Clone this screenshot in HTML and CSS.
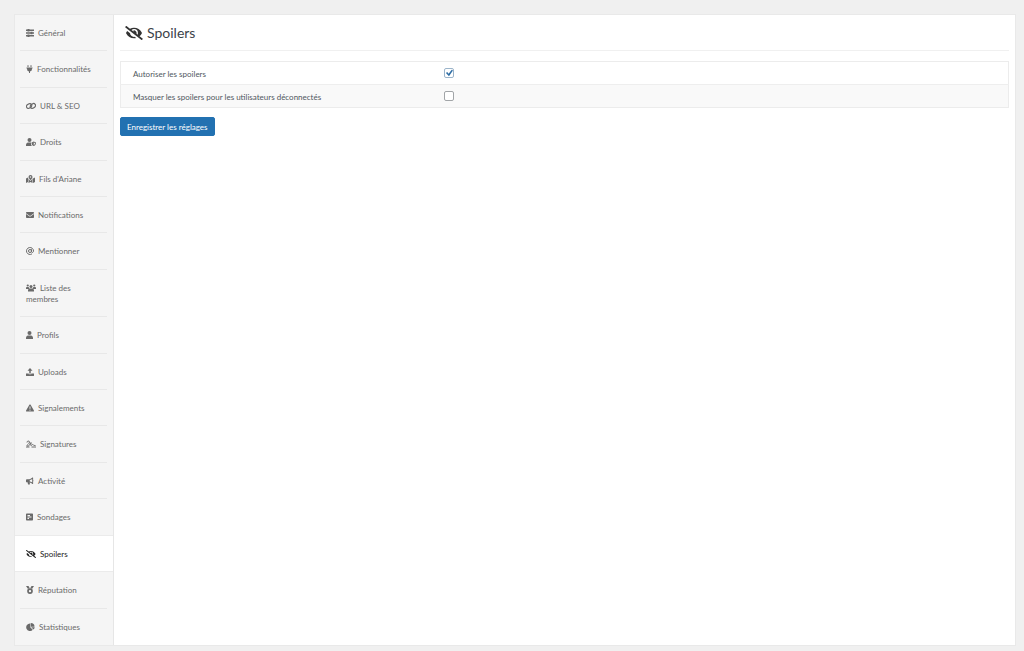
FILE: index.html
```html
<!DOCTYPE html>
<html lang="fr">

<head>
    <meta charset="UTF-8">
    <meta name="viewport" content="width=device-width, initial-scale=1.0">
    <title>Spoilers</title>
    <link rel="stylesheet" href="styles.css">
</head>

<body>

    <svg class="sprite" aria-hidden="true">
        <symbol id="sliders" viewBox="0 0 16 16">
            <path d="M0 1h3V0h4v1h9v3H7v1H3V4H0zM0 6.500h9v-1h4v1h3v3h-3v1H9v-1H0zM0 12h3v-1h4v1h9v3H7v1H3v-1H0z" />
        </symbol>
        <symbol id="plug" viewBox="0 0 12 16">
            <path d="M2 1a1 1 0 0 1 2 0v3H2zM8 1a1 1 0 0 1 2 0v3H8zM0 5h12v2h-1v1a5 5 0 0 1-4 4.900V16H5v-3.100A5 5 0 0 1 1 8V7H0z" />
        </symbol>
        <symbol id="link" viewBox="0 0 20 16">
            <g fill="none" stroke="currentColor" stroke-width="2.400">
                <rect x="1" y="4" width="11" height="8" rx="4" transform="rotate(-35 6.500 8.500)" />
                <rect x="8" y="4" width="11" height="8" rx="4" transform="rotate(-35 13.500 7.500)" />
            </g>
        </symbol>
        <symbol id="user-shield" viewBox="0 0 20 16">
            <circle cx="7" cy="4" r="4" />
            <path d="M0 16v-2c0-3 2-5 4-5h6v3c0 2 1 3 2 4z" />
            <path fill-rule="evenodd" d="M15.500 7L20 9c0 3-1 6-4.500 7C12 15 11 12 11 9zM15.500 9v5c1.500-.7 2.500-2 2.500-4z" />
        </symbol>
        <symbol id="map" viewBox="0 0 18 16">
            <path d="M0 7l4-2v9l-4 2zM14 7l4-2v9l-4 2zM5 6c1 3 3 5 4 6 1-1 3-3 4-6v10l-4-2-4 2z" />
            <path fill-rule="evenodd" d="M9 0a4 4 0 0 1 4 4c0 2-2 4-4 6.500C7 8 5 6 5 4a4 4 0 0 1 4-4zm0 2.500a1.500 1.500 0 1 0 0 3 1.500 1.500 0 0 0 0-3z" />
        </symbol>
        <symbol id="envelope" viewBox="0 0 16 16">
            <path d="M1.500 2h13A1.500 1.500 0 0 1 16 3.500v1L8 10 0 4.500v-1A1.500 1.500 0 0 1 1.500 2zM0 6l8 5.500L16 6v6.500a1.500 1.500 0 0 1-1.500 1.500h-13A1.500 1.500 0 0 1 0 12.500z" />
        </symbol>
        <symbol id="at" viewBox="0 0 16 16">
            <g fill="none" stroke="currentColor" stroke-width="2">
                <circle cx="8" cy="8" r="3" />
                <path d="M11 4.500V9c0 3 4 2.500 4-1a7 7 0 1 0-3 5.700" />
            </g>
        </symbol>
        <symbol id="users" viewBox="0 0 20 16">
            <circle cx="3.500" cy="3" r="2.200" />
            <circle cx="16.500" cy="3" r="2.200" />
            <circle cx="10" cy="5" r="3" />
            <path d="M0 10V8c0-1 1-2 2-2h3.500c0 1.500.5 2.500 1.500 3l-2 1zM20 10V8c0-1-1-2-2-2h-3.500c0 1.500-.5 2.500-1.500 3l2 1zM4 15v-2c0-2 1-4 3.500-4h5C15 9 16 11 16 13v2z" />
        </symbol>
        <symbol id="user" viewBox="0 0 14 16">
            <circle cx="7" cy="4" r="4" />
            <path d="M0 16v-2c0-3 2-5 4-5h6c2 0 4 2 4 5v2z" />
        </symbol>
        <symbol id="upload" viewBox="0 0 16 16">
            <path d="M8 0l5 5.500h-3.500V11h-3V5.500H3z" />
            <path d="M0 11h5.500v1.500h5V11H16v4a1 1 0 0 1-1 1H1a1 1 0 0 1-1-1z" />
        </symbol>
        <symbol id="warning" viewBox="0 0 16 16">
            <path fill-rule="evenodd" d="M8 1c.5 0 .9.300 1.200.7l6.600 11.500c.5 1-.1 1.800-1.200 1.800H1.400c-1.100 0-1.700-.8-1.200-1.800L6.800 1.700C7.100 1.300 7.500 1 8 1zM7 5l.3 5h1.400L9 5zM8 11a1.200 1.200 0 1 0 0 2.400A1.200 1.200 0 0 0 8 11z" />
        </symbol>
        <symbol id="signature" viewBox="0 0 20 16">
            <path fill="none" stroke="currentColor" stroke-width="2" d="M2 5V4c0-2 5-3 5 0 0 4-5 5-5 7s3 2 5-1l3-5c1 3-2 6 0 6s3-3 4-2 0 2 5 2M0 14h7M11 14h9" />
        </symbol>
        <symbol id="bullhorn" viewBox="0 0 18 16">
            <path fill-rule="evenodd" d="M15 0c.6 0 1 .4 1 1v5a2 2 0 0 1 0 3v5c0 1-1 1-1.500.700C12.500 13 11 11.500 8 11.200L9 15c0 .6-.3 1-1 1H5.500c-.5 0-.8-.2-1-.7L3.500 11H2a2 2 0 0 1-2-2V6a2 2 0 0 1 2-2h5c3.500 0 5.500-2 7.500-3.700zM14 3.500C12 5 10.500 5.700 8.500 6v3c2 .3 3.500 1 5.500 2.500z" />
        </symbol>
        <symbol id="poll" viewBox="0 0 14 16">
            <path fill-rule="evenodd" d="M1.500 1h11A1.500 1.500 0 0 1 14 2.500v11a1.500 1.500 0 0 1-1.500 1.500h-11A1.500 1.500 0 0 1 0 13.500v-11A1.500 1.500 0 0 1 1.500 1zM3 4v1.800h5V4zM3 7.100v1.800h8V7.100zM3 10.200V12h3v-1.800z" />
        </symbol>
        <symbol id="eye-slash" viewBox="0 0 640 512">
            <path d="M320 400c-75.850 0-137.250-58.710-142.900-133.110L72.200 185.820c-13.790 17.300-26.480 35.590-36.720 55.590a32.350 32.350 0 0 0 0 29.190C89.710 376.410 197.070 448 320 448c26.910 0 52.870-4 77.890-10.460L346 397.390a144.130 144.130 0 0 1-26 2.610zm313.820 58.100l-110.550-85.440a331.250 331.250 0 0 0 81.250-102.070 32.350 32.350 0 0 0 0-29.190C550.290 135.590 442.930 64 320 64a308.150 308.150 0 0 0-147.320 37.700L45.460 3.370A16 16 0 0 0 23 6.180L3.370 31.450A16 16 0 0 0 6.180 53.900l588.360 454.730a16 16 0 0 0 22.460-2.810l19.640-25.270a16 16 0 0 0-2.820-22.450zm-183.720-142l-39.300-30.380A94.750 94.750 0 0 0 416 256a94.760 94.760 0 0 0-121.310-92.210A47.650 47.650 0 0 1 304 192a46.640 46.640 0 0 1-1.540 10l-73.610-56.890A142.310 142.310 0 0 1 320 112a143.920 143.920 0 0 1 144 144c0 21.630-5.290 41.790-13.900 60.110z" />
        </symbol>
        <symbol id="medal" viewBox="0 0 16 16">
            <path d="M0 0h5l2.500 4.500C6 4.700 4.700 5.300 4 6zM16 0h-5L8.500 4.500C10 4.700 11.300 5.300 12 6z" />
            <path fill-rule="evenodd" d="M8 4.500a5.700 5.700 0 1 1 0 11.400A5.700 5.700 0 0 1 8 4.500zM8 8a2.300 2.300 0 1 0 0 4.600A2.300 2.300 0 0 0 8 8z" />
        </symbol>
        <symbol id="chart-pie" viewBox="0 0 17 16">
            <path d="M8 1v7.500l5 5A7.500 7.500 0 1 1 8 1zM9 0a7.500 7.500 0 0 1 7.500 7.500H9zM10 8.500h7a7.500 7.500 0 0 1-2.500 4.500z" />
        </symbol>
    </svg>

    <div class="container">
        <nav class="menu">
            <ul>
                <li><a href="#"><svg class="icon"><use href="#sliders" /></svg>Général</a></li>
                <li><a href="#"><svg class="icon small"><use href="#plug" /></svg>Fonctionnalités</a></li>
                <li><a href="#"><svg class="icon wide"><use href="#link" /></svg>URL &amp; SEO</a></li>
                <li><a href="#"><svg class="icon wide"><use href="#user-shield" /></svg>Droits</a></li>
                <li><a href="#"><svg class="icon medium"><use href="#map" /></svg>Fils d'Ariane</a></li>
                <li><a href="#"><svg class="icon"><use href="#envelope" /></svg>Notifications</a></li>
                <li><a href="#"><svg class="icon"><use href="#at" /></svg>Mentionner</a></li>
                <li><a href="#"><svg class="icon wide"><use href="#users" /></svg>Liste des membres</a></li>
                <li><a href="#"><svg class="icon small"><use href="#user" /></svg>Profils</a></li>
                <li><a href="#"><svg class="icon"><use href="#upload" /></svg>Uploads</a></li>
                <li><a href="#"><svg class="icon"><use href="#warning" /></svg>Signalements</a></li>
                <li><a href="#"><svg class="icon wide"><use href="#signature" /></svg>Signatures</a></li>
                <li><a href="#"><svg class="icon"><use href="#bullhorn" /></svg>Activité</a></li>
                <li class="before-active"><a href="#"><svg class="icon small"><use href="#poll" /></svg>Sondages</a></li>
                <li class="active"><a href="#" aria-current="page"><svg class="icon wide"><use href="#eye-slash" /></svg>Spoilers</a></li>
                <li><a href="#"><svg class="icon"><use href="#medal" /></svg>Réputation</a></li>
                <li><a href="#"><svg class="icon medium"><use href="#chart-pie" /></svg>Statistiques</a></li>
            </ul>
        </nav>

        <main class="content">
            <h1><svg class="icon-title"><use href="#eye-slash" /></svg>Spoilers</h1>
            <form>
                <table class="options">
                    <tr>
                        <th scope="row"><label for="allow-spoilers">Autoriser les spoilers</label></th>
                        <td><input type="checkbox" id="allow-spoilers" checked></td>
                    </tr>
                    <tr>
                        <th scope="row"><label for="hide-spoilers">Masquer les spoilers pour les utilisateurs déconnectés</label></th>
                        <td><input type="checkbox" id="hide-spoilers"></td>
                    </tr>
                </table>
                <button type="submit">Enregistrer les réglages</button>
            </form>
        </main>
    </div>

</body>

</html>
```
FILE: styles.css
```css
* {
    margin: 0;
    padding: 0;
    box-sizing: border-box;
}

body {
    min-height: 100vh;
    display: flex;
    padding: 14px 8px 5px 14px;
    background-color: #f0f0f0;
    color: #50575e;
    font-family: Lato, "Open Sans", sans-serif;
    font-size: 8px;
    line-height: 11px;
}

.sprite {
    display: none;
}

svg {
    fill: currentColor;
}

.container {
    flex: 1;
    display: flex;
    background-color: #fff;
    border: 1px solid #e9e9e9;
}

/* Menu */
.menu {
    display: flex;
    flex: 0 0 99px;
    background-color: #f5f5f5;
    border-right: 1px solid #e6e6e6;
}

.menu ul {
    flex: 1;
    display: flex;
    flex-direction: column;
    list-style: none;
}

.menu li {
    flex: 1 0 auto;
    display: flex;
    padding: 0 6px 0 5px;
}

.menu a {
    flex: 1;
    padding: 13px 6px 11px;
    border-bottom: 1px solid #e8e8e8;
    color: #6a6a6a;
    text-decoration: none;
}

.menu li:last-child a {
    border-bottom-color: transparent;
}

.menu .before-active,
.menu .active {
    border-bottom: 1px solid #ebebeb;
}

.menu .before-active a,
.menu .active a {
    border-bottom: none;
}

.menu .active {
    background-color: #fff;
}

.menu .active a {
    color: #222;
}

.icon {
    width: 8px;
    height: 8px;
    margin-right: 4px;
    vertical-align: -1px;
}

.icon.small {
    width: 7px;
}

.icon.medium {
    width: 9px;
}

.icon.wide {
    width: 10px;
}

/* Content */
.content {
    flex: 1;
    padding: 0 6px;
}

h1 {
    display: flex;
    align-items: center;
    gap: 4px;
    height: 36px;
    padding-left: 5px;
    margin-bottom: 10px;
    border-bottom: 1px solid #f0f0f0;
    color: #3c434a;
    font-size: 14px;
    font-weight: 400;
    line-height: 20px;
}

.icon-title {
    width: 18px;
    height: 14px;
    color: #333;
}

.options {
    width: 100%;
    margin-bottom: 9px;
    border: 1px solid #ececec;
    border-collapse: collapse;
}

.options tr {
    height: 23px;
}

.options tr + tr {
    background-color: #f9f9f9;
    border-top: 1px solid #eee;
}

.options th {
    width: 35%;
    padding: 2px 12px 0;
    font-weight: 400;
    text-align: left;
}

.options td {
    padding: 0 13px;
}

input[type="checkbox"] {
    appearance: none;
    display: block;
    width: 10px;
    height: 10px;
    background-color: #fff;
    border: 1px solid #a2a5a8;
    border-radius: 2px;
}

input[type="checkbox"]:checked {
    border-color: #9bb4ca;
}

input[type="checkbox"]:checked::before {
    content: "";
    display: block;
    width: 8px;
    height: 8px;
    background-color: #2f6ea5;
    clip-path: polygon(8% 50%, 24% 38%, 42% 58%, 80% 8%, 96% 20%, 46% 92%);
}

button {
    height: 19px;
    padding: 1px 6px 0;
    background-color: #2271b1;
    border: 1px solid #2271b1;
    border-radius: 2px;
    color: #fff;
    font-family: inherit;
    font-size: 8px;
    line-height: 16px;
}
```
